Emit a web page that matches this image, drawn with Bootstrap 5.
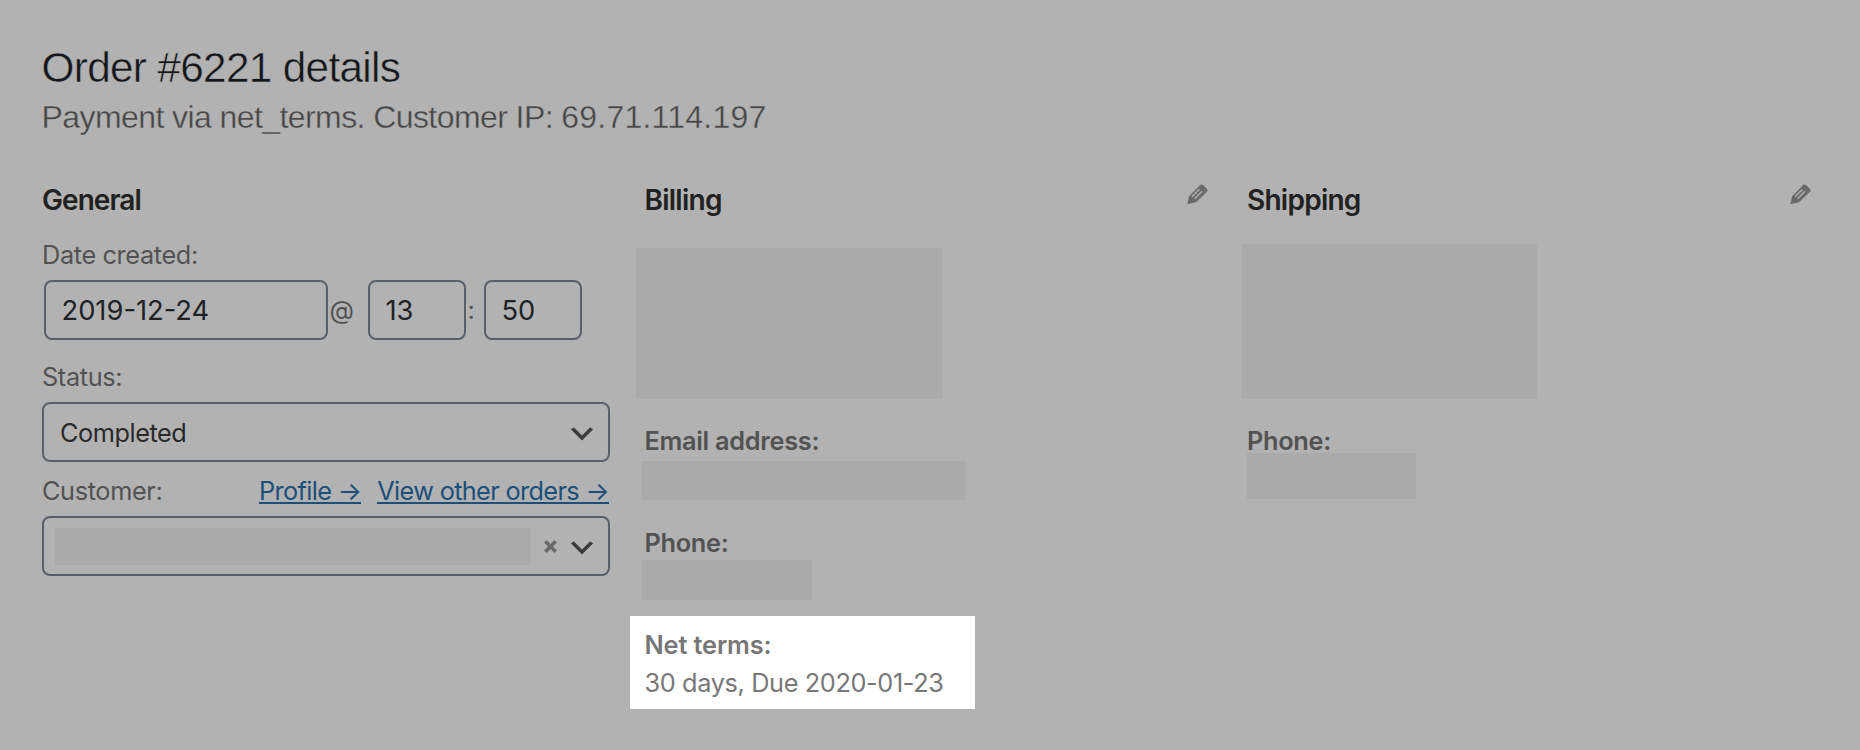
<!DOCTYPE html>
<html lang="en">
<head>
<meta charset="utf-8">
<meta name="viewport" content="width=device-width, initial-scale=1">
<title>Order #6221 details</title>
<link rel="stylesheet" href="https://cdn.jsdelivr.net/npm/bootstrap@5.3.0/dist/css/bootstrap.min.css">
<style>
body{font-family:Inter,"Liberation Sans",sans-serif;font-size:25.3px;line-height:38px;letter-spacing:-.37px;color:#525252;background:#b2b2b2;height:750px;overflow:hidden;white-space:nowrap}
.order{padding:44px 45px 0 41.5px}
/* background-coloured stroke thins the regular weight to a light one */
.order-title{font-family:"Liberation Sans",Arial,sans-serif;font-size:42.3px;font-weight:400;line-height:48px;letter-spacing:-.67px;color:#15171a;-webkit-text-stroke:.5px #b2b2b2}
.order-meta{font-family:"Liberation Sans",Arial,sans-serif;font-size:32px;line-height:40px;letter-spacing:-.58px;margin-top:5px;color:#484848;-webkit-text-stroke:.35px #b2b2b2}
.order-meta span{letter-spacing:.23px}
.order-cols{display:grid;grid-template-columns:568px 568px 568px;column-gap:34.5px;margin:44px 0 0 .5px}
.col-title{font-size:28px;font-weight:600;line-height:38px;letter-spacing:-.75px;color:#212121}
.field-box{height:60px;border:2px solid #5a606a;border-radius:8px;background:transparent}
input.field-box{font-size:27.3px;letter-spacing:0;color:#202225;padding:0 0 0 15.5px;box-shadow:none}
.date-box{width:284px}
.time-box{width:98px}
.links{letter-spacing:-.65px}
.links a{color:#1c4f79;text-decoration:none;border-bottom:2px solid;line-height:28px;height:27px}
.redact{background:#aaa}
.label-strong{font-weight:600;letter-spacing:-.28px}
.net-terms{width:345px;height:93px;background:#fff;color:#777;margin:16px 0 0 -14.5px;padding:10px 0 0 14.5px}
.net-terms .label-strong{letter-spacing:-.12px}
.value{color:#292929;padding-top:1px;letter-spacing:-.45px}
</style>
</head>
<body>
<main class="order">
  <h1 class="order-title m-0">Order #6221 details</h1>
  <p class="order-meta mb-0">Payment via net_terms. Customer IP: <span>69.71.114.197</span></p>
  <div class="order-cols">
    <section>
      <h2 class="col-title" style="margin-bottom:17px;letter-spacing:-.95px">General</h2>
      <div>Date created:</div>
      <div class="d-flex align-items-center" style="margin:6px 0 0 2px">
        <input class="field-box date-box" value="2019-12-24" aria-label="Date">
        <span style="width:40px;padding-left:1.5px">@</span>
        <input class="field-box time-box" value="13" aria-label="Hour">
        <span style="width:18px;padding-left:1.5px">:</span>
        <input class="field-box time-box" value="50" aria-label="Minute">
      </div>
      <div style="margin-top:18px">Status:</div>
      <div class="field-box d-flex align-items-center justify-content-between" style="margin-top:6px;padding:0 10px 0 16px">
        <span class="value">Completed</span>
        <svg width="32" height="32" viewBox="0 0 20 20" style="margin-top:4px"><path fill="#3c3c3c" d="M5 6l5 5 5-5 2 1-7 7-7-7 2-1z"/></svg>
      </div>
      <div class="d-flex justify-content-between" style="margin-top:10px">
        <span>Customer:</span>
        <span class="links d-flex" style="gap:16px;padding:5px 1px 0 0"><a href="#">Profile →</a><a href="#">View other orders →</a></span>
      </div>
      <div class="field-box d-flex align-items-center" style="margin-top:6px;padding:0 10px 0 11px">
        <div class="redact" style="width:476px;height:37px"></div>
        <svg class="ms-auto overflow-visible" width="13" height="13" viewBox="0 0 13 13" style="margin-right:9px"><path d="M1.3 1.3l10.4 10.4M11.7 1.3L1.3 11.7" stroke="#6a6a6a" stroke-width="3.6"/></svg>
        <svg width="32" height="32" viewBox="0 0 20 20" style="margin-top:4px"><path fill="#3c3c3c" d="M5 6l5 5 5-5 2 1-7 7-7-7 2-1z"/></svg>
      </div>
    </section>
    <section>
      <div class="d-flex justify-content-between align-items-start">
        <h2 class="col-title m-0">Billing</h2>
        <svg width="21" height="21" viewBox="0 0 63 63" style="margin:2.5px 4.5px 0 0"><path fill="#6a6a6a" d="M1 61L6 37 39 4q5-5 10 0l11 11q4 4 0 8L27 55z"/><path d="M16 37l20-20M24 43l20-20" stroke="#b2b2b2" stroke-width="4" stroke-linecap="round"/></svg>
      </div>
      <div class="redact" style="width:306px;height:151px;margin:29px 0 0 -8.5px"></div>
      <div class="label-strong" style="margin-top:23px">Email address:</div>
      <div class="redact" style="width:324px;height:39px;margin:1px 0 0 -3.5px"></div>
      <div class="label-strong" style="margin-top:24px">Phone:</div>
      <div class="redact" style="width:170px;height:40px;margin:-2px 0 0 -2.5px"></div>
      <div class="net-terms">
        <div class="label-strong">Net terms:</div>
        <div>30 days, Due 2020-01-23</div>
      </div>
    </section>
    <section>
      <div class="d-flex justify-content-between align-items-start">
        <h2 class="col-title m-0">Shipping</h2>
        <svg width="21" height="21" viewBox="0 0 63 63" style="margin:2.5px 4.5px 0 0"><path fill="#6a6a6a" d="M1 61L6 37 39 4q5-5 10 0l11 11q4 4 0 8L27 55z"/><path d="M16 37l20-20M24 43l20-20" stroke="#b2b2b2" stroke-width="4" stroke-linecap="round"/></svg>
      </div>
      <div class="redact" style="width:295px;height:155px;margin:25px 0 0 -5px"></div>
      <div class="label-strong" style="margin-top:23px">Phone:</div>
      <div class="redact" style="width:169px;height:46px;margin-top:-7px"></div>
    </section>
  </div>
</main>
<script src="https://cdn.jsdelivr.net/npm/bootstrap@5.3.0/dist/js/bootstrap.bundle.min.js"></script>
</body>
</html>
